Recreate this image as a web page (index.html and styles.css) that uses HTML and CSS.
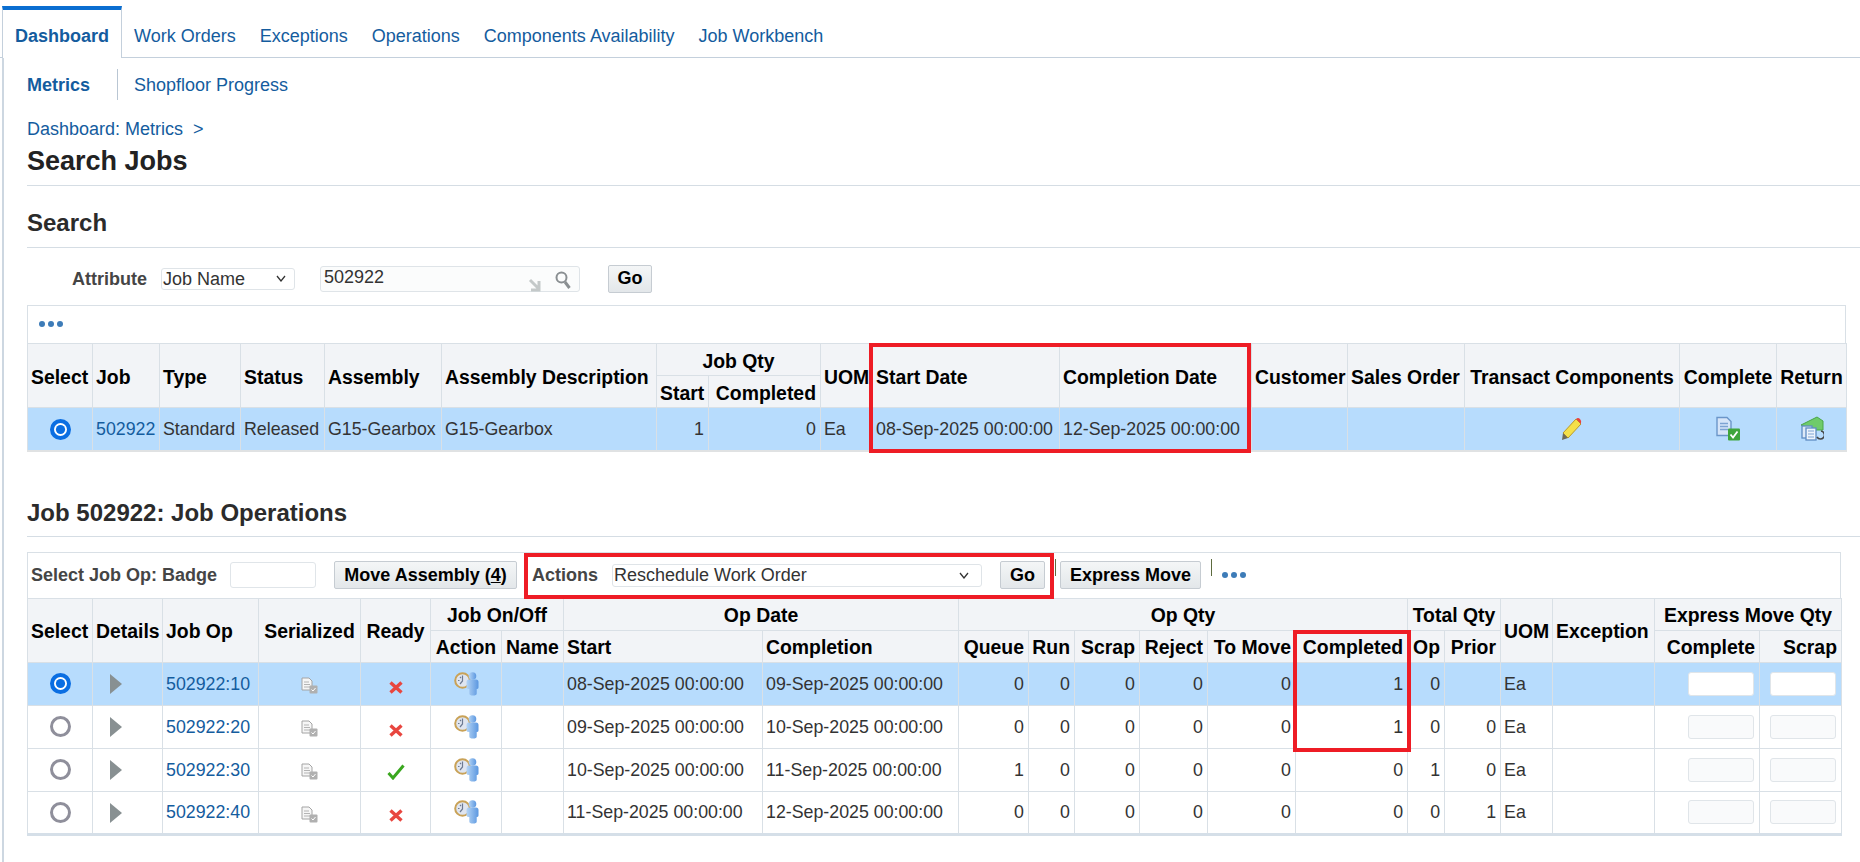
FILE: index.html
```html
<!DOCTYPE html>
<html lang="en">
<head>
<meta charset="utf-8">
<title>Search Jobs</title>
<link rel="stylesheet" href="styles.css">
</head>
<body>
<svg class="defs" width="0" height="0" aria-hidden="true">
  <defs>
    <linearGradient id="manBlue" x1="0" y1="0" x2="1" y2="0"><stop offset="0" stop-color="#b4d4f5"/><stop offset="1" stop-color="#5b97e0"/></linearGradient>
    <symbol id="i-radio-on" viewBox="0 0 21 21"><circle cx="10.5" cy="10.5" r="8.5" fill="#fff" stroke="#0a6ee2" stroke-width="4"/><circle cx="10.5" cy="10.5" r="4.6" fill="#0a6ee2"/></symbol>
    <symbol id="i-radio-off" viewBox="0 0 21 21"><circle cx="10.5" cy="10.5" r="9" fill="#fff" stroke="#8f8f9b" stroke-width="3"/></symbol>
    <symbol id="i-tri" viewBox="0 0 12 20"><path d="M0 0 12 10 0 20Z" fill="#889092"/></symbol>
    <symbol id="i-doc" viewBox="0 0 17 17"><path d="M1 1h7l3 3v9H1Z" fill="#f6f6f6" stroke="#a4a4a4"/><path d="M3 5h5M3 7.5h6M3 10h6" stroke="#b4b4b4"/><rect x="8.500" y="8.500" width="8" height="8" rx="1" fill="#b0b0b0"/><path d="M10.500 12.500l1.500 1.500 2.500-3" fill="none" stroke="#fff"/></symbol>
    <symbol id="i-x" viewBox="0 0 14 13"><path d="M1.500 1.500 12.500 11.500M12.500 1.500 1.500 11.500" stroke="#e8463f" stroke-width="3.400"/></symbol>
    <symbol id="i-check" viewBox="0 0 18 16"><path d="M1.500 9 6 14 16.500 1.500" fill="none" stroke="#3aa71f" stroke-width="3"/></symbol>
    <symbol id="i-person" viewBox="0 0 25 24">
      <circle cx="8.500" cy="8.500" r="7.300" fill="#dfe5f0" stroke="#c9a257" stroke-width="2"/>
      <path d="M8.500 3.500v5.500l-2.500 3M4 8.500h1.500M6 5l1 1" fill="none" stroke="#6d7a92" stroke-width="1.200"/>
      <circle cx="18.500" cy="4" r="3.800" fill="url(#manBlue)"/>
      <path d="M12.500 10q0-2.500 2.500-2.500h7q2.500 0 2.500 2.500v5.500q0 1.500-1.800 1.500v4.500q0 2-3.700 2t-3.700-2V17q-2.800 0-2.800-1.500Z" fill="url(#manBlue)"/>
    </symbol>
    <symbol id="i-pencil" viewBox="0 0 22 23">
      <path d="M2 16 15 2l5 5L7 21Z" fill="#f4e04a" stroke="#b99a2a"/>
      <path d="M15 2q2-2 4 0t1 5Z" fill="#e8413c"/>
      <path d="M2 16l5 5-6 2Z" fill="#6e6a58"/>
    </symbol>
    <symbol id="i-complete" viewBox="0 0 24 24">
      <path d="M1 1h10l4 4v14H1Z" fill="#d6e5f8" stroke="#6b96c9" stroke-width="1.400"/>
      <path d="M4 7h8M4 10h8M4 13h8" stroke="#7da3d2" stroke-width="1.400"/>
      <rect x="12" y="12" width="12" height="12" rx="1" fill="#3fa53c"/>
      <path d="M14.500 18l2.500 3 4.500-6" fill="none" stroke="#fff" stroke-width="1.800"/>
    </symbol>
    <symbol id="i-return" viewBox="0 0 24 25">
      <path d="M1 9 17 1l6 4v9L10 14Z" fill="#6fcb6a" stroke="#4aa648"/>
      <rect x="2" y="10" width="10" height="12" fill="#dde9f7" stroke="#5f8cc4" stroke-width="1.300"/>
      <rect x="6" y="12" width="10" height="12" fill="#eef4fc" stroke="#5f8cc4" stroke-width="1.300"/>
      <path d="M8 15h6M8 18h6M8 21h6" stroke="#7da3d2"/>
      <path d="M21 15a4 4 0 1 1-4 6" fill="none" stroke="#444" stroke-width="1.600"/>
    </symbol>
    <symbol id="i-dots" viewBox="0 0 24 6"><circle cx="3" cy="3" r="3" fill="#3d7cb8"/><circle cx="12" cy="3" r="3" fill="#3d7cb8"/><circle cx="21" cy="3" r="3" fill="#3d7cb8"/></symbol>
    <symbol id="i-chev" viewBox="0 0 10 7"><path d="M1 1l4 5 4-5" fill="none" stroke="#333" stroke-width="1.300"/></symbol>
  </defs>
</svg>

<nav class="tabs">
  <a class="tab tab-on">Dashboard</a>
  <a class="tab">Work Orders</a>
  <a class="tab">Exceptions</a>
  <a class="tab">Operations</a>
  <a class="tab">Components Availability</a>
  <a class="tab">Job Workbench</a>
</nav>

<main class="page">
  <div class="subtabs">
    <a class="sub sub-on">Metrics</a>
    <a class="sub">Shopfloor Progress</a>
  </div>
  <div class="crumbs"><a>Dashboard: Metrics</a><span class="crumb-sep">&gt;</span></div>
  <h1 class="title">Search Jobs</h1>
  <h2 class="heading heading-search">Search</h2>

  <div class="search">
    <label class="label label-attr">Attribute</label>
    <div class="select select-attr"><span>Job Name</span><svg class="chev"><use href="#i-chev"/></svg></div>
    <div class="lov">
      <input class="lov-input" value="502922">
      <svg class="lov-arrow" viewBox="0 0 14 14"><path d="M2 2 10 10M11 3v9H3" fill="none" stroke="#c4c9c9" stroke-width="3"/></svg>
      <svg class="lov-glass" viewBox="0 0 16 18"><circle cx="6.500" cy="6.500" r="5" fill="none" stroke="#8a8f92" stroke-width="2"/><path d="M10 11l4.500 6" stroke="#8a8f92" stroke-width="3"/></svg>
    </div>
    <button class="btn btn-go">Go</button>
  </div>

  <section class="tblwrap tblwrap-jobs">
    <div class="toolbar toolbar-jobs"><svg class="dots"><use href="#i-dots"/></svg></div>
    <table class="grid grid-jobs">
      <colgroup>
        <col class="c65"><col class="c67"><col class="c81"><col class="c84"><col class="c117"><col class="c215"><col class="c52"><col class="c112"><col class="c52"><col class="c187"><col class="c192"><col class="c96"><col class="c117"><col class="c215"><col class="c97"><col class="c70">
      </colgroup>
      <thead>
        <tr>
          <th rowspan="2">Select</th><th rowspan="2">Job</th><th rowspan="2">Type</th><th rowspan="2">Status</th><th rowspan="2">Assembly</th><th rowspan="2">Assembly Description</th>
          <th colspan="2" class="ctr">Job Qty</th>
          <th rowspan="2">UOM</th><th rowspan="2">Start Date</th><th rowspan="2">Completion Date</th><th rowspan="2">Customer</th><th rowspan="2">Sales Order</th><th rowspan="2" class="ctr">Transact Components</th><th rowspan="2" class="ctr">Complete</th><th rowspan="2" class="ctr">Return</th>
        </tr>
        <tr><th class="num">Start</th><th class="num">Completed</th></tr>
      </thead>
      <tbody>
        <tr class="sel">
          <td class="ctr"><svg class="ic-radio"><use href="#i-radio-on"/></svg></td>
          <td><a>502922</a></td><td>Standard</td><td>Released</td><td>G15-Gearbox</td><td>G15-Gearbox</td>
          <td class="num">1</td><td class="num">0</td><td>Ea</td>
          <td>08-Sep-2025 00:00:00</td><td>12-Sep-2025 00:00:00</td><td></td><td></td>
          <td class="ctr"><svg class="ic-pencil"><use href="#i-pencil"/></svg></td>
          <td class="ctr"><svg class="ic-24"><use href="#i-complete"/></svg></td>
          <td class="ctr"><svg class="ic-24"><use href="#i-return"/></svg></td>
        </tr>
      </tbody>
    </table>
    <div class="mark mark-dates"></div>
  </section>

  <h2 class="heading heading-ops">Job 502922: Job Operations</h2>

  <section class="tblwrap tblwrap-ops">
    <div class="toolbar toolbar-ops">
      <span class="label">Select Job Op:</span>
      <label class="label label-badge">Badge</label>
      <input class="field field-badge">
      <button class="btn btn-move">Move Assembly (<u>4</u>)</button>
      <span class="label label-actions">Actions</span>
      <div class="select select-actions"><span>Reschedule Work Order</span><svg class="chev"><use href="#i-chev"/></svg></div>
      <button class="btn btn-go2">Go</button>
      <span class="vsep vsep-a"></span>
      <button class="btn btn-express">Express Move</button>
      <span class="vsep vsep-b"></span>
      <svg class="dots"><use href="#i-dots"/></svg>
    </div>
    <table class="grid grid-ops">
      <colgroup>
        <col class="c65"><col class="c70"><col class="c96"><col class="c102"><col class="c70"><col class="c71"><col class="c62"><col class="c199"><col class="c196"><col class="c70"><col class="c46"><col class="c65"><col class="c68"><col class="c88"><col class="c112"><col class="c37"><col class="c56"><col class="c52"><col class="c102"><col class="c105"><col class="c82">
      </colgroup>
      <thead>
        <tr>
          <th rowspan="2">Select</th><th rowspan="2">Details</th><th rowspan="2">Job Op</th><th rowspan="2" class="ctr">Serialized</th><th rowspan="2" class="ctr">Ready</th>
          <th colspan="2" class="ctr">Job On/Off</th><th colspan="2" class="ctr">Op Date</th><th colspan="6" class="ctr">Op Qty</th><th colspan="2" class="ctr">Total Qty</th>
          <th rowspan="2">UOM</th><th rowspan="2">Exception</th><th colspan="2" class="ctr">Express Move Qty</th>
        </tr>
        <tr>
          <th class="ctr">Action</th><th class="ctr">Name</th><th>Start</th><th>Completion</th>
          <th class="num">Queue</th><th class="num">Run</th><th class="num">Scrap</th><th class="num">Reject</th><th class="num">To Move</th><th class="num">Completed</th>
          <th class="num">Op</th><th class="num">Prior</th><th class="num">Complete</th><th class="num">Scrap</th>
        </tr>
      </thead>
      <tbody>
        <tr class="sel">
          <td class="ctr"><svg class="ic-radio"><use href="#i-radio-on"/></svg></td>
          <td class="det"><svg class="ic-tri"><use href="#i-tri"/></svg></td>
          <td><a>502922:10</a></td>
          <td class="ctr"><svg class="ic-doc"><use href="#i-doc"/></svg></td>
          <td class="ctr"><svg class="ic-x"><use href="#i-x"/></svg></td>
          <td class="ctr"><svg class="ic-person"><use href="#i-person"/></svg></td><td></td>
          <td>08-Sep-2025 00:00:00</td><td>09-Sep-2025 00:00:00</td>
          <td class="num">0</td><td class="num">0</td><td class="num">0</td><td class="num">0</td><td class="num">0</td><td class="num">1</td><td class="num">0</td><td class="num"></td><td>Ea</td><td></td>
          <td class="num"><input class="field field-qty"></td><td class="num"><input class="field field-qty"></td>
        </tr>
        <tr>
          <td class="ctr"><svg class="ic-radio"><use href="#i-radio-off"/></svg></td>
          <td class="det"><svg class="ic-tri"><use href="#i-tri"/></svg></td>
          <td><a>502922:20</a></td>
          <td class="ctr"><svg class="ic-doc"><use href="#i-doc"/></svg></td>
          <td class="ctr"><svg class="ic-x"><use href="#i-x"/></svg></td>
          <td class="ctr"><svg class="ic-person"><use href="#i-person"/></svg></td><td></td>
          <td>09-Sep-2025 00:00:00</td><td>10-Sep-2025 00:00:00</td>
          <td class="num">0</td><td class="num">0</td><td class="num">0</td><td class="num">0</td><td class="num">0</td><td class="num">1</td><td class="num">0</td><td class="num">0</td><td>Ea</td><td></td>
          <td class="num"><input class="field field-qty field-off"></td><td class="num"><input class="field field-qty field-off"></td>
        </tr>
        <tr>
          <td class="ctr"><svg class="ic-radio"><use href="#i-radio-off"/></svg></td>
          <td class="det"><svg class="ic-tri"><use href="#i-tri"/></svg></td>
          <td><a>502922:30</a></td>
          <td class="ctr"><svg class="ic-doc"><use href="#i-doc"/></svg></td>
          <td class="ctr"><svg class="ic-check"><use href="#i-check"/></svg></td>
          <td class="ctr"><svg class="ic-person"><use href="#i-person"/></svg></td><td></td>
          <td>10-Sep-2025 00:00:00</td><td>11-Sep-2025 00:00:00</td>
          <td class="num">1</td><td class="num">0</td><td class="num">0</td><td class="num">0</td><td class="num">0</td><td class="num">0</td><td class="num">1</td><td class="num">0</td><td>Ea</td><td></td>
          <td class="num"><input class="field field-qty field-off"></td><td class="num"><input class="field field-qty field-off"></td>
        </tr>
        <tr>
          <td class="ctr"><svg class="ic-radio"><use href="#i-radio-off"/></svg></td>
          <td class="det"><svg class="ic-tri"><use href="#i-tri"/></svg></td>
          <td><a>502922:40</a></td>
          <td class="ctr"><svg class="ic-doc"><use href="#i-doc"/></svg></td>
          <td class="ctr"><svg class="ic-x"><use href="#i-x"/></svg></td>
          <td class="ctr"><svg class="ic-person"><use href="#i-person"/></svg></td><td></td>
          <td>11-Sep-2025 00:00:00</td><td>12-Sep-2025 00:00:00</td>
          <td class="num">0</td><td class="num">0</td><td class="num">0</td><td class="num">0</td><td class="num">0</td><td class="num">0</td><td class="num">0</td><td class="num">1</td><td>Ea</td><td></td>
          <td class="num"><input class="field field-qty field-off"></td><td class="num"><input class="field field-qty field-off"></td>
        </tr>
      </tbody>
    </table>
    <div class="mark mark-actions"></div>
    <div class="mark mark-completed"></div>
  </section>
</main>
</body>
</html>
```
FILE: styles.css
```css
* { box-sizing: border-box; }
html, body { margin: 0; padding: 0; }
body {
  width: 1860px;
  height: 862px;
  overflow: hidden;
  background: #fff;
  color: #333;
  font-family: "Liberation Sans", Arial, sans-serif;
  font-size: 18px;
  line-height: 20px;
}
.defs { position: absolute; }
a { color: #145c9e; text-decoration: none; }
svg { display: inline-block; vertical-align: middle; }

/* Tabs */
.tabs {
  display: flex;
  height: 58px;
  padding: 6px 0 0 2px;
  border-bottom: 1px solid #c4d0dc;
}
.tab {
  display: flex;
  align-items: center;
  height: 51px;
  padding: 8px 12px 0;
}
.tab-on {
  width: 120px;
  padding-left: 12px;
  height: 52px;
  border-top: 4px solid #0a6ed1;
  border-left: 1px solid #c4d0dc;
  border-right: 1px solid #c4d0dc;
  background: #fff;
  font-weight: bold;
  padding-top: 4px;
}

/* Page frame */
.page {
  margin-left: 2px;
  height: 804px;
  padding-left: 23px;
  border-left: 2px solid #cdd7e1;
}

/* Sub tabs */
.subtabs {
  display: flex;
  align-items: center;
  height: 49px;
  padding-top: 4px;
}
.sub { display: flex; align-items: center; height: 31px; }
.sub-on {
  width: 91px;
  font-weight: bold;
  border-right: 1px solid #b9c6d3;
  margin-right: 16px;
}

.crumbs { margin-top: 12px; height: 20px; }
.crumb-sep { margin-left: 10px; color: #145c9e; }

.title {
  margin: 7px 0 0;
  height: 40px;
  font-size: 27px;
  line-height: 31px;
  font-weight: bold;
  color: #222;
  border-bottom: 1px solid #d5dde4;
}
.heading {
  margin: 0;
  font-size: 24px;
  font-weight: bold;
  color: #2b2b2b;
  border-bottom: 1px solid #d5dde4;
}
.heading-search { margin-top: 24px; height: 38px; line-height: 26px; }

/* Search row */
.search {
  display: flex;
  align-items: center;
  height: 27px;
  margin-top: 17px;
  padding-left: 45px;
}
.label { font-weight: bold; color: #454545; white-space: nowrap; }
.label-attr { width: 89px; }
.select {
  display: flex;
  align-items: center;
  justify-content: space-between;
  height: 22px;
  background: #fff;
  border: 1px solid #dfe4e8;
  border-radius: 3px;
}
.select-attr { width: 134px; padding: 0 8px 0 1px; }
.chev { width: 10px; height: 7px; }
.lov { position: relative; width: 260px; height: 26px; margin-left: 25px; }
.lov-input {
  width: 100%;
  height: 100%;
  padding: 0 3px 2px;
  border: 1px solid #dfe4e8;
  border-radius: 3px;
  background: #fbfcfc;
  font: 18px "Liberation Sans", Arial, sans-serif;
  color: #333;
}
.lov-arrow { position: absolute; left: 208px; top: 12px; width: 14px; height: 14px; }
.lov-glass { position: absolute; left: 235px; top: 5px; width: 16px; height: 18px; }

.btn {
  height: 28px;
  padding: 0;
  border: 1px solid #c6ccd2;
  border-radius: 2px;
  background: linear-gradient(#f4f6f7, #e3e7ea);
  font: bold 18px "Liberation Sans", Arial, sans-serif;
  color: #000;
}
.btn-go { width: 44px; margin-left: 28px; }

/* Table wrap */
.tblwrap { position: relative; }
.tblwrap-jobs { margin-top: 13px; width: 1819px; }
.tblwrap-ops { margin-top: 15px; width: 1814px; }
.toolbar {
  display: flex;
  align-items: center;
  border: 1px solid #d9e0e6;
  border-bottom: 0;
}
.toolbar-jobs { height: 38px; padding: 0 0 2px 11px; }
.toolbar-ops { height: 46px; padding-left: 3px; }
.dots { width: 24px; height: 6px; }

.grid {
  width: 100%;
  table-layout: fixed;
  border-collapse: collapse;
  color: #333;
}
.grid th, .grid td {
  padding: 0 3px;
  border: 1px solid #d9e0e6;
  white-space: nowrap;
  overflow: visible;
  text-align: left;
}
.grid th {
  background: #f2f4f7;
  color: #000;
  font-size: 19.4px;
  font-weight: bold;
  height: 32px;
  padding-top: 2px;
}
.grid td { height: 43px; font-size: 17.8px; }
.grid .ctr { text-align: center; }
.grid .num { text-align: right; padding-right: 4px; }
.grid .det { padding-left: 17px; }
.sel td { background: #b7dcfd; }
.grid-jobs { border-bottom: 2px solid #e0e2e3; }
.grid-ops { border-bottom: 3px solid #d5dfe8; }

/* Column widths */
.c37 { width: 37px; } .c46 { width: 46px; } .c50 { width: 50px; } .c52 { width: 52px; }
.c56 { width: 56px; } .c62 { width: 62px; } .c65 { width: 65px; } .c67 { width: 67px; }
.c68 { width: 68px; } .c70 { width: 70px; } .c71 { width: 71px; } .c81 { width: 81px; }
.c82 { width: 82px; } .c84 { width: 84px; } .c88 { width: 88px; } .c93 { width: 93px; }
.c96 { width: 96px; } .c97 { width: 97px; } .c102 { width: 102px; } .c105 { width: 105px; }
.c112 { width: 112px; } .c117 { width: 117px; } .c187 { width: 187px; } .c189 { width: 189px; }
.c192 { width: 192px; } .c195 { width: 195px; } .c196 { width: 196px; } .c199 { width: 199px; }
.c215 { width: 215px; } .c216 { width: 216px; }

/* Icons */
.ic-radio { width: 21px; height: 21px; }
.ic-tri { width: 12px; height: 20px; }
.ic-doc { width: 17px; height: 17px; margin-top: 4px; }
.ic-x { width: 14px; height: 13px; margin-top: 5px; }
.ic-check { width: 18px; height: 16px; margin-top: 4px; }
.ic-person { width: 25px; height: 24px; }
.ic-pencil { width: 22px; height: 23px; }
.ic-24 { width: 24px; height: 25px; }

/* Ops heading and toolbar */
.heading-ops { margin-top: 48px; height: 37px; line-height: 26px; }
.field {
  border: 1px solid #e0e5e9;
  border-radius: 3px;
  background: #fff;
}
.field-badge { width: 86px; height: 26px; margin-left: 13px; }
.label-badge { margin-left: 5px; }
.btn-move { width: 183px; margin-left: 18px; }
.label-actions { margin-left: 15px; width: 80px; }
.select-actions { width: 370px; height: 23px; padding: 0 12px 0 1px; }
.btn-go2 { width: 45px; margin-left: 18px; }
.btn-express { width: 141px; margin-left: 4px; }
.vsep { width: 1px; height: 17px; background: #5d6b3f; align-self: flex-start; margin-top: 6px; }
.vsep-a { margin-left: 10px; }
.vsep-b { margin-left: 10px; margin-right: 10px; }
.field-qty { width: 66px; height: 24px; margin-right: 1px; vertical-align: middle; }
.field-off { background: #f9fafb; }

/* Red annotation boxes */
.mark { position: absolute; border: 4px solid #ee1c25; pointer-events: none; }
.mark-dates { left: 842px; top: 38px; width: 382px; height: 110px; }
.mark-actions { left: 497px; top: 1px; width: 530px; height: 46px; }
.mark-completed { left: 1266px; top: 78px; width: 118px; height: 122px; }
```
